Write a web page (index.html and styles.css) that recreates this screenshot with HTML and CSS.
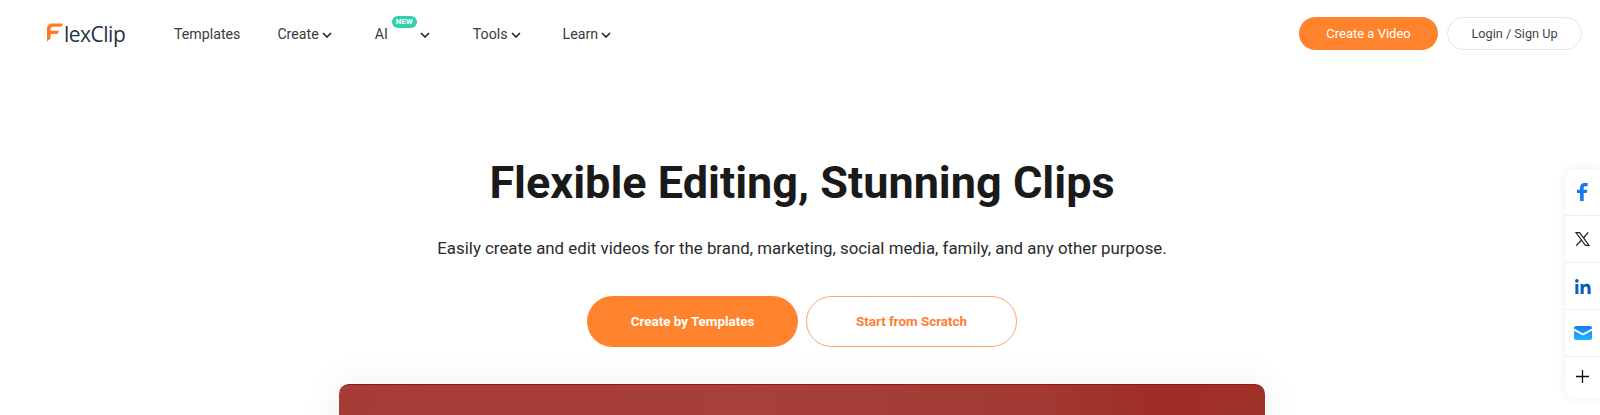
FILE: index.html
```html
<!DOCTYPE html>
<html lang="en">
<head>
    <meta charset="UTF-8">
    <meta name="viewport" content="width=device-width, initial-scale=1.0">
    <title>FlexClip</title>
    <link rel="stylesheet" href="styles.css">
</head>
<body>
    <header class="header">
        <a class="logo" href="#">
            <svg class="logo-mark" width="16" height="19" viewBox="0 0 16 19">
                <path d="M0 6C0 2.500 2 .5 5.500 .5H16L14.500 3.800H6C4.400 3.800 3.600 4.700 3.600 6.300V7.800H12L10.800 11H3.600V15.500L0 18.500Z" fill="#ff7a2b"/>
            </svg>
            <span>lexClip</span>
        </a>
        <nav class="nav">
            <a class="nav-item nav-templates" href="#">Templates</a>
            <a class="nav-item nav-create" href="#">Create
                <svg class="chev" viewBox="0 0 10 6"><path d="M1 1l4 4 4-4"/></svg>
            </a>
            <a class="nav-item nav-ai" href="#">AI
                <span class="badge">NEW</span>
                <svg class="chev" viewBox="0 0 10 6"><path d="M1 1l4 4 4-4"/></svg>
            </a>
            <a class="nav-item nav-tools" href="#">Tools
                <svg class="chev" viewBox="0 0 10 6"><path d="M1 1l4 4 4-4"/></svg>
            </a>
            <a class="nav-item" href="#">Learn
                <svg class="chev" viewBox="0 0 10 6"><path d="M1 1l4 4 4-4"/></svg>
            </a>
        </nav>
        <div class="header-actions">
            <a class="btn-small btn-orange" href="#">Create a Video</a>
            <a class="btn-small btn-login" href="#">Login / Sign Up</a>
        </div>
    </header>

    <main class="hero">
        <h1>Flexible Editing, Stunning Clips</h1>
        <p>Easily create and edit videos for the brand, marketing, social media, family, and any other purpose.</p>
        <div class="hero-actions">
            <a class="btn-big btn-fill" href="#">Create by Templates</a>
            <a class="btn-big btn-outline" href="#">Start from Scratch</a>
        </div>
        <div class="video"></div>
    </main>

    <aside class="share">
        <a class="share-item" href="#">
            <svg width="13" height="18" viewBox="0 0 13 18"><path d="M4 18V10H1V6.800H4V4.600C4 1.700 5.700 0 8.400 0H11.600V3.200H9.400C8.200 3.200 7.700 3.800 7.700 4.900V6.800H11.400L10.800 10H7.700V18Z" fill="#1877f2"/></svg>
        </a>
        <a class="share-item" href="#">
            <svg width="15" height="14" viewBox="0 0 15 14"><path d="M1 .6H4.600L14 13.400H10.400Z" fill="none" stroke="#222" stroke-width="1.100"/><path d="M13.200 .4L8.400 6M6.400 8.200L1.200 13.600" fill="none" stroke="#222" stroke-width="1.300"/></svg>
        </a>
        <a class="share-item" href="#">
            <svg width="16" height="15" viewBox="0 0 16 15"><g fill="#0a5cb8"><circle cx="1.900" cy="1.900" r="1.800"/><rect x=".4" y="5" width="3" height="10"/><path d="M5.600 5H8.500V6.400C9.100 5.400 10.200 4.800 11.600 4.800 14.600 4.800 15.600 6.600 15.600 9.400V15H12.600V10C12.600 8.500 12.200 7.500 10.900 7.500 9.400 7.500 8.700 8.500 8.700 10V15H5.600Z"/></g></svg>
        </a>
        <a class="share-item" href="#">
            <svg width="18" height="14" viewBox="0 0 18 14"><defs><linearGradient id="mail" x1="0" y1="0" x2="0" y2="1"><stop offset="0" stop-color="#1a7cf0"/><stop offset="1" stop-color="#1fb6fb"/></linearGradient></defs><path d="M2 0H16C17.100 0 18 .9 18 2V2.600L9 7.400 0 2.600V2C0 .9 .9 0 2 0ZM0 4.800L9 9.600 18 4.800V12C18 13.100 17.100 14 16 14H2C.9 14 0 13.100 0 12Z" fill="url(#mail)"/></svg>
        </a>
        <a class="share-item" href="#">
            <svg width="13" height="13" viewBox="0 0 13 13"><path d="M6.500 0V13M0 6.500H13" stroke="#111" stroke-width="1.300"/></svg>
        </a>
    </aside>
</body>
</html>
```
FILE: styles.css
```css
html, body {
    height: 100%;
}
body {
    margin: 0;
    font-family: Roboto, Arial, sans-serif;
    color: #1a1a1a;
    background: #fff;
    overflow: hidden;
}
a {
    text-decoration: none;
    color: inherit;
}

/* top bar */
.header {
    display: flex;
    align-items: center;
    height: 67px;
    padding: 0 18px 0 47px;
}
.logo {
    display: flex;
    align-items: flex-end;
    width: 127px;
    font-family: "Open Sans", Arial, sans-serif;
    font-size: 21px;
    letter-spacing: -0.5px;
    line-height: 24px;
    color: #1f3340;
}
.logo-mark {
    margin: 0 1px 4px 0;
}
.nav {
    display: flex;
    align-items: center;
    font-size: 14.2px;
    color: #3a3a3a;
    flex: 1;
}
.nav-item {
    position: relative;
    display: flex;
    align-items: center;
    white-space: nowrap;
}
.nav-templates { margin-right: 37px; }
.nav-create { margin-right: 43px; }
.nav-ai { margin-right: 43px; }
.nav-tools { margin-right: 42px; }
.chev {
    width: 10px;
    height: 6px;
    margin: 2px 0 0 3px;
    fill: none;
    stroke: #222;
    stroke-width: 1.6;
}
.nav-ai .chev {
    margin-left: 32px;
}
.badge {
    position: absolute;
    left: 17px;
    top: -10px;
    width: 25px;
    height: 12px;
    border-radius: 6px;
    background: #2fd1ad;
    color: #fff;
    font-size: 8px;
    font-weight: 700;
    line-height: 12px;
    text-align: center;
}
.header-actions {
    display: flex;
    gap: 9px;
}
.btn-small {
    box-sizing: border-box;
    height: 33px;
    border-radius: 17px;
    font-size: 13px;
    line-height: 33px;
    text-align: center;
}
.btn-orange {
    width: 139px;
    background: #ff832d;
    color: #fff;
}
.btn-login {
    width: 135px;
    border: 1px solid #e2e5ea;
    font-size: 12.7px;
    line-height: 31px;
    color: #444;
}

/* hero */
.hero {
    display: flex;
    flex-direction: column;
    align-items: center;
    padding-left: 4px;
}
.hero h1 {
    margin: 88px 0 0;
    font-size: 45px;
    font-weight: 700;
    line-height: 56px;
}
.hero p {
    margin: 25px 0 0;
    font-size: 16.85px;
    line-height: 24px;
    color: #2b2b2b;
}
.hero-actions {
    display: flex;
    gap: 8px;
    margin-top: 36px;
}
.btn-big {
    box-sizing: border-box;
    width: 211px;
    height: 51px;
    border-radius: 26px;
    font-size: 13.4px;
    font-weight: 700;
    line-height: 51px;
    text-align: center;
}
.btn-fill {
    background: #ff832d;
    color: #fff;
}
.btn-outline {
    border: 1px solid #ffa06a;
    line-height: 49px;
    color: #ff7d33;
}
.video {
    box-sizing: border-box;
    width: 926px;
    height: 520px;
    margin-top: 37px;
    border-top: 1px solid #9c1410;
    border-radius: 10px;
    background: linear-gradient(90deg, #a63c38 0%, #a73f3b 45%, #a23a33 75%, #9e2e26 88%, #9f3028 100%);
    box-shadow: 0 0 40px rgba(0, 0, 0, 0.07);
}

/* share bar */
.share {
    position: fixed;
    top: 169px;
    right: 0;
    width: 35px;
    background: #fff;
    border-radius: 10px 0 0 10px;
    box-shadow: 0 0 10px rgba(0, 0, 0, 0.08);
}
.share-item {
    display: flex;
    align-items: center;
    justify-content: center;
    height: 46px;
    border-bottom: 1px solid #eceef0;
}
.share-item:last-child {
    box-sizing: border-box;
    height: 41px;
    padding-bottom: 2px;
    border-bottom: 0;
}
```
